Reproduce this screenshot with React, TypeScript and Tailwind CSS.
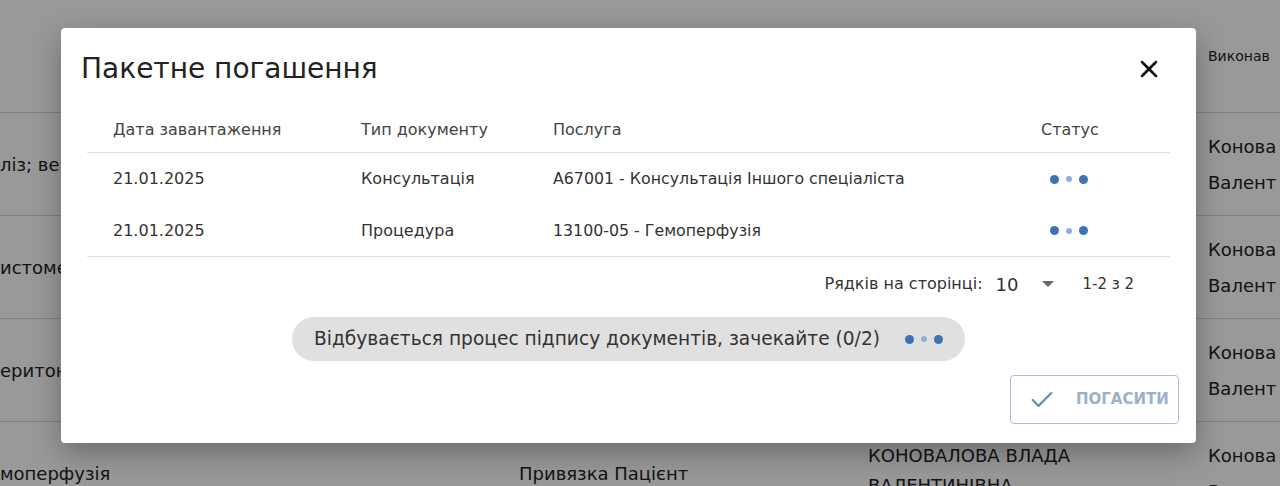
import { X, Check } from 'lucide-react';

const bgRows = [
  { a: 'ліз; венозна кров', b: '', c: [], d: ['Коновалова', 'Валентинівна'] },
  { a: 'истометрія', b: '', c: [], d: ['Коновалова', 'Валентинівна'] },
  { a: 'еритонеальний', b: '', c: [], d: ['Коновалова', 'Валентинівна'] },
  { a: 'моперфузія', b: 'Привязка Пацієнт', c: ['КОНОВАЛОВА ВЛАДА', 'ВАЛЕНТИНІВНА'], d: ['Коновалова', 'Валентинівна'] },
];

const docs = [
  { date: '21.01.2025', type: 'Консультація', service: 'A67001 - Консультація Іншого спеціаліста' },
  { date: '21.01.2025', type: 'Процедура', service: '13100-05 - Гемоперфузія' },
];

function Dots() {
  return (
    <div className="flex items-center gap-[7px]">
      <span className="w-[9px] h-[9px] rounded-full bg-[#3d73b3]" />
      <span className="w-[6px] h-[6px] rounded-full bg-[#8fb0d6]" />
      <span className="w-[9px] h-[9px] rounded-full bg-[#3d73b3]" />
    </div>
  );
}

export default function App() {
  return (
    <div className="relative w-[1280px] h-[486px] overflow-hidden bg-white font-['DejaVu_Sans',sans-serif] text-[#222]">
      {/* page behind the dialog */}
      <div className="grid grid-cols-[519px_349px_340px_1fr]">
        <div className="col-span-3 h-[113px] border-b border-[#d8d8d8]" />
        <div className="h-[113px] border-b border-[#d8d8d8] flex items-center text-[14px] whitespace-nowrap overflow-hidden">
          Виконав
        </div>
        {bgRows.map((r, i) => (
          <div key={i} className="contents">
            <div className="h-[103px] border-b border-[#d8d8d8] flex items-center text-[18px] whitespace-nowrap overflow-hidden">
              {r.a}
            </div>
            <div className="h-[103px] border-b border-[#d8d8d8] flex items-center text-[18px] whitespace-nowrap">
              {r.b}
            </div>
            <div className="h-[103px] border-b border-[#d8d8d8] pt-[19px] text-[18px] leading-[30px] whitespace-nowrap">
              {r.c.map((l) => (
                <div key={l}>{l}</div>
              ))}
            </div>
            <div className="h-[103px] border-b border-[#d8d8d8] pt-[16px] text-[18px] leading-[36px] whitespace-nowrap overflow-hidden">
              {r.d.map((l) => (
                <div key={l}>{l.slice(0, 6)}</div>
              ))}
            </div>
          </div>
        ))}
      </div>

      {/* backdrop */}
      <div className="absolute inset-0 bg-black/40" />

      {/* dialog */}
      <div className="absolute left-[61px] top-[28px] w-[1135px] h-[415px] bg-white rounded-[4px] shadow-[0_10px_30px_rgba(0,0,0,0.3)] flex flex-col">
        <div className="flex items-center justify-between pt-[24px] pl-[20px] pr-[33px]">
          <h2 className="text-[28px] leading-[34px] text-[#222]">Пакетне погашення</h2>
          <X className="w-[28px] h-[28px] text-[#111]" strokeWidth={2.2} />
        </div>

        <div className="mx-[26px] mt-[21px] text-[16px] text-[#333]">
          <div className="grid grid-cols-[248px_192px_488px_1fr] h-[46px] items-center border-b border-[#e0e0e0] text-[#444]">
            <div className="pl-[26px]">Дата завантаження</div>
            <div className="pl-[26px]">Тип документу</div>
            <div className="pl-[26px]">Послуга</div>
            <div className="pl-[26px]">Статус</div>
          </div>
          {docs.map((d, i) => (
            <div
              key={i}
              className={`grid grid-cols-[248px_192px_488px_1fr] h-[52px] items-center ${
                i === docs.length - 1 ? 'border-b border-[#e0e0e0]' : ''
              }`}
            >
              <div className="pl-[26px]">{d.date}</div>
              <div className="pl-[26px]">{d.type}</div>
              <div className="pl-[26px] whitespace-nowrap text-[15.8px]">{d.service}</div>
              <div className="pl-[35px]">
                <Dots />
              </div>
            </div>
          ))}
          <div className="flex items-center justify-end h-[54px] pr-[36px] text-[16px] text-[#333]">
            <span>Рядків на сторінці:</span>
            <span className="ml-[13px] text-[18px]">10</span>
            <svg className="ml-[23px] w-[14px] h-[8px]" viewBox="0 0 14 8">
              <path d="M1 1h12L7 7z" fill="#666" />
            </svg>
            <span className="ml-[27px] text-[15px]">1-2 з 2</span>
          </div>
        </div>

        <div className="flex justify-center mt-[6px]">
          <div className="flex items-center h-[44px] rounded-full bg-[#e0e0e0] pl-[22px] pr-[22px] text-[18.6px] text-[#333]">
            <span>Відбувається процес підпису документів, зачекайте (0/2)</span>
            <div className="ml-[25px]">
              <Dots />
            </div>
          </div>
        </div>

        <div className="flex justify-end mt-[14px] pr-[17px]">
          <button className="flex items-center h-[49px] w-[169px] border border-[#a8c0dd] rounded-[4px] pl-[17px] gap-[20px] text-[15px] font-bold uppercase text-[#9db0c8]">
            <Check className="w-[28px] h-[28px] text-[#6f8fb7]" strokeWidth={2} />
            <span>Погасити</span>
          </button>
        </div>
      </div>
    </div>
  );
}
